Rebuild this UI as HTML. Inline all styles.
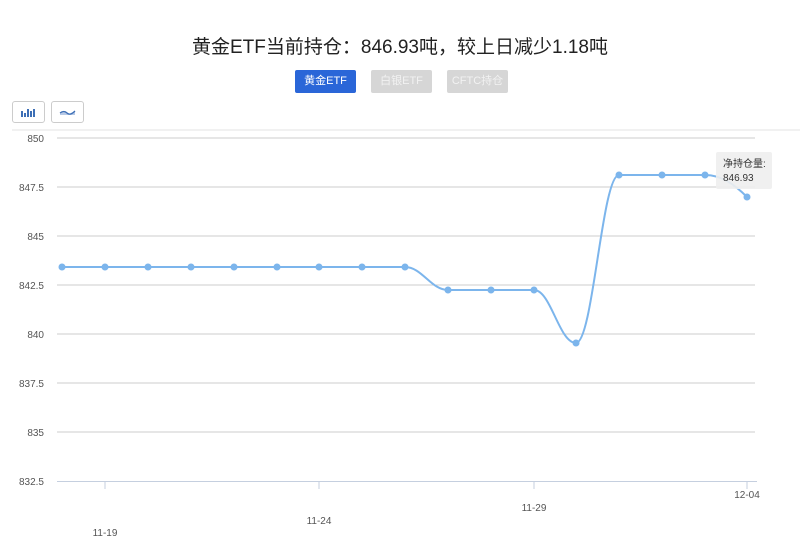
<!DOCTYPE html>
<html><head><meta charset="utf-8"><style>
body{margin:0;width:800px;height:550px;background:#fff;font-family:"Liberation Sans","Noto Sans CJK SC",sans-serif;position:relative;overflow:hidden}
.t{position:absolute;top:32px;left:0;width:800px;text-align:center;font-size:19px;color:#222}
.b{position:absolute;top:70px;height:23px;line-height:23px;font-size:11px;text-align:center;border-radius:2px}
.i{position:absolute;top:101px;height:20px;border:1px solid #ccc;border-radius:3px;background:#fff}
</style></head><body>
<div class="t">黄金ETF当前持仓：846.93吨，较上日减少1.18吨</div>
<div class="b" style="left:295px;width:61px;background:#2a66d8;color:#fff">黄金ETF</div>
<div class="b" style="left:371px;width:61px;background:#d6d6d6;color:#f2f2f2">白银ETF</div>
<div class="b" style="left:447px;width:61px;background:#d6d6d6;color:#f2f2f2">CFTC持仓</div>
<div class="i" style="left:12px;width:31px"><svg width="31" height="20"><g fill="#3d6fb6"><rect x="8" y="9" width="2" height="6"/><rect x="11" y="11" width="2" height="4"/><rect x="14" y="7" width="2" height="8"/><rect x="17" y="9" width="2" height="6"/><rect x="20" y="7" width="2" height="8"/></g></svg></div>
<div class="i" style="left:51px;width:31px"><svg width="31" height="20"><path d="M8 11 Q12 8 15 11 T23 9 L23 13 L8 13Z" fill="#b7c9e6"/><path d="M8 11 Q12 8 15 11 T23 9" stroke="#3d6fb6" fill="none" stroke-width="1.3"/></svg></div>
<svg width="800" height="550" style="position:absolute;left:0;top:0">
<line x1="12" y1="130" x2="800" y2="130" stroke="#e3e3e3"/>
<g stroke="#ccc" stroke-width="1">
<line x1="57" y1="138" x2="755" y2="138"/><line x1="57" y1="187" x2="755" y2="187"/><line x1="57" y1="236" x2="755" y2="236"/><line x1="57" y1="285" x2="755" y2="285"/><line x1="57" y1="334" x2="755" y2="334"/><line x1="57" y1="383" x2="755" y2="383"/><line x1="57" y1="432" x2="755" y2="432"/>
</g>
<line x1="57" y1="481.5" x2="757" y2="481.5" stroke="#c5cfdf"/>
<g stroke="#c5cfdf"><line x1="105" y1="482" x2="105" y2="489"/><line x1="319" y1="482" x2="319" y2="489"/><line x1="534" y1="482" x2="534" y2="489"/><line x1="747" y1="482" x2="747" y2="489"/></g>
<g font-size="10" fill="#555" text-anchor="end">
<text x="44" y="142">850</text><text x="44" y="191">847.5</text><text x="44" y="240">845</text><text x="44" y="289">842.5</text><text x="44" y="338">840</text><text x="44" y="387">837.5</text><text x="44" y="436">835</text><text x="44" y="485">832.5</text>
</g>
<g font-size="10" fill="#555" text-anchor="middle">
<text x="105" y="536">11-19</text><text x="319" y="524">11-24</text><text x="534" y="511">11-29</text><text x="747" y="498">12-04</text>
</g>
<path d="M62 267 L405 267 C422 267 431 290 448 290 L534 290 C551 290 559 343 576 343 C593 343 602 175 619 175 L705 175 C722 175 735 185 747 197" stroke="#7cb5ec" stroke-width="2" fill="none"/>
<g fill="#7cb5ec">
<circle cx="62" cy="267" r="3.5"/><circle cx="105" cy="267" r="3.5"/><circle cx="148" cy="267" r="3.5"/><circle cx="191" cy="267" r="3.5"/><circle cx="234" cy="267" r="3.5"/><circle cx="277" cy="267" r="3.5"/><circle cx="319" cy="267" r="3.5"/><circle cx="362" cy="267" r="3.5"/><circle cx="405" cy="267" r="3.5"/><circle cx="448" cy="290" r="3.5"/><circle cx="491" cy="290" r="3.5"/><circle cx="534" cy="290" r="3.5"/><circle cx="576" cy="343" r="3.5"/><circle cx="619" cy="175" r="3.5"/><circle cx="662" cy="175" r="3.5"/><circle cx="705" cy="175" r="3.5"/><circle cx="747" cy="197" r="3.5"/>
</g>
<rect x="716" y="152" width="56" height="37" rx="2" fill="#eee" fill-opacity="0.9"/>
<text x="723" y="167" font-size="10" fill="#333">净持仓量:</text>
<text x="723" y="181" font-size="10" fill="#333">846.93</text>
</svg>
</body></html>
